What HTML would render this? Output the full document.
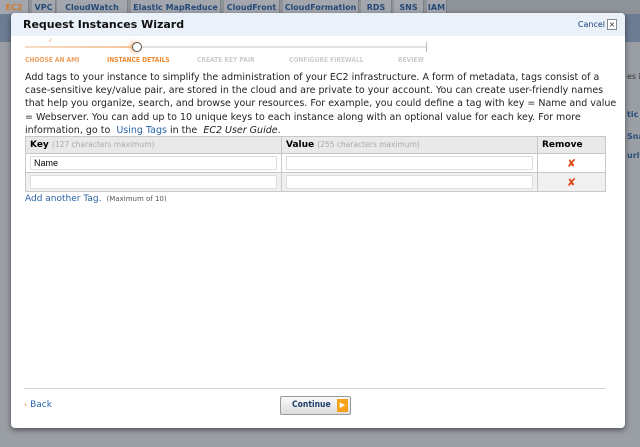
<!DOCTYPE html>
<html><head><style>
body{margin:0;width:640px;height:447px;overflow:hidden;background:#9a9ea5;font-family:"DejaVu Sans","Liberation Sans",sans-serif;position:relative}
.tabs{position:absolute;top:0;left:0;width:640px;height:14px;background:#8e9299}
.tab{position:absolute;top:0;height:14px;background:#a3a7ad;font-weight:bold;font-size:8px;color:#254a78;line-height:16px;text-align:center;border-right:1px solid #7d8188;white-space:nowrap;overflow:hidden}
.band{position:absolute;top:14px;left:0;width:640px;height:28px;background:#6c7c92}
.modal{position:absolute;left:11px;top:13px;width:614px;height:415px;background:#fff;border-radius:4px;box-shadow:0 2px 6px rgba(0,0,0,.5);overflow:hidden}
.hdr{height:23px;background:#eaf1f9;font-weight:bold;font-size:11px;color:#111;line-height:24px;padding-left:12px;position:relative}
.cancel{position:absolute;right:8px;top:6px;font-size:8px;color:#1a3f78;font-weight:normal;line-height:11px}
.cancel span{display:inline-block;width:8px;height:9px;border:1px solid #888;text-align:center;line-height:9px;font-size:8px;color:#333;margin-left:2px;background:#fff}
.step{position:absolute;top:56px;font-size:7px;color:#ccc;font-weight:bold;transform:scaleX(.85);transform-origin:left;white-space:nowrap}
p{position:absolute;left:25px;top:71px;width:600px;margin:0;font-size:9.5px;line-height:13.2px;color:#222;white-space:nowrap}
a{color:#2a63a8;text-decoration:none}
table{position:absolute;left:25px;top:136px;width:581px;border-collapse:collapse;font-size:9px}
td,th{border:1px solid #c8c8c8;padding:0 4px;text-align:left}
th{background:#e9e9e9;height:16px}
th small{font-weight:normal;color:#aaa;font-size:7.5px}
td{height:18px;background:#fff}
tr.g td{background:#f0f0f0}
.in{height:12px;border:1px solid #ddd;background:#fff;font-family:"Liberation Sans",sans-serif;font-size:9px;line-height:12px;padding-left:3px}
.x{color:#e04a1a;font-weight:bold;font-size:11px;text-align:center}
</style></head><body>
<div class="tabs">
<div class="tab" style="left:0;width:28px;color:#d07a30">EC2</div>
<div class="tab" style="left:32px;width:23px">VPC</div>
<div class="tab" style="left:57px;width:70px">CloudWatch</div>
<div class="tab" style="left:131px;width:89px">Elastic MapReduce</div>
<div class="tab" style="left:224px;width:55px">CloudFront</div>
<div class="tab" style="left:283px;width:75px">CloudFormation</div>
<div class="tab" style="left:361px;width:30px">RDS</div>
<div class="tab" style="left:394px;width:29px">SNS</div>
<div class="tab" style="left:427px;width:19px">IAM</div>
</div>
<div class="band"></div>
<div style="position:absolute;left:627px;top:72px;font-size:8px;color:#333;white-space:nowrap">es i</div>
<div style="position:absolute;left:627px;top:110px;font-size:8px;color:#2a4d7a;font-weight:bold;white-space:nowrap">tic I</div>
<div style="position:absolute;left:627px;top:132px;font-size:8px;color:#2a4d7a;font-weight:bold">Sna</div>
<div style="position:absolute;left:627px;top:151px;font-size:8px;color:#2a4d7a;font-weight:bold">urity</div>
<div class="modal">
<div class="hdr">Request Instances Wizard<div class="cancel">Cancel<span>×</span></div></div>
<div style="position:absolute;left:14px;top:33px;width:113px;height:2px;background:linear-gradient(90deg,#f8dcc4,#f3c49a)"></div>
<div style="position:absolute;left:127px;top:33px;width:289px;height:2px;background:#e2e2e2"></div>
<div style="position:absolute;left:415px;top:29px;width:1px;height:10px;background:#bbb"></div>
<div style="position:absolute;left:121px;top:29px;width:8px;height:8px;border:1px solid #555;border-radius:50%;background:#fff;box-shadow:-2px 0 4px #f3b07a"></div>
<div style="position:absolute;left:37px;top:24px;font-size:6px;color:#f0a060">✓</div>
</div>
<div class="step" style="left:25px;color:#f0a060">CHOOSE AN AMI</div>
<div class="step" style="left:107px;color:#f08a30">INSTANCE DETAILS</div>
<div class="step" style="left:197px">CREATE KEY PAIR</div>
<div class="step" style="left:289px">CONFIGURE FIREWALL</div>
<div class="step" style="left:398px">REVIEW</div>
<p>Add tags to your instance to simplify the administration of your EC2 infrastructure. A form of metadata, tags consist of a<br>case-sensitive key/value pair, are stored in the cloud and are private to your account. You can create user-friendly names<br>that help you organize, search, and browse your resources. For example, you could define a tag with key = Name and value<br>= Webserver. You can add up to 10 unique keys to each instance along with an optional value for each key. For more<br>information, go to &nbsp;<a>Using Tags</a> in the &nbsp;<i>EC2 User Guide</i>.</p>
<table>
<tr><th style="width:247px">Key <small>(127 characters maximum)</small></th><th style="width:247px">Value <small>(255 characters maximum)</small></th><th>Remove</th></tr>
<tr><td><div class="in">Name</div></td><td><div class="in"></div></td><td class="x">✘</td></tr>
<tr class="g"><td><div class="in"></div></td><td><div class="in"></div></td><td class="x">✘</td></tr>
</table>
<div style="position:absolute;left:25px;top:194px;font-size:9px"><a>Add another Tag.</a> <span style="font-size:7px;color:#555">&nbsp;(Maximum of 10)</span></div>
<div style="position:absolute;left:24px;top:388px;width:582px;height:1px;background:#d4d4d4"></div>
<div style="position:absolute;left:24px;top:400px;font-size:9px;color:#2a63a8"><span style="color:#f08a30;font-size:8px">‹</span> Back</div>
<div style="position:absolute;left:280px;top:396px;width:69px;height:17px;border:1px solid #999;border-radius:2px;background:linear-gradient(#fafafa,#dcdcdc)">
<span style="position:absolute;left:11px;top:0;font-weight:bold;font-size:8.5px;color:#1f3f6a;line-height:17px;transform:scaleX(.9);transform-origin:left">Continue</span>
<span style="position:absolute;right:2px;top:2px;width:11px;height:13px;background:#f7a21d;color:#fff;font-size:7px;line-height:13px;text-align:center">▶</span></div>
</body></html>
